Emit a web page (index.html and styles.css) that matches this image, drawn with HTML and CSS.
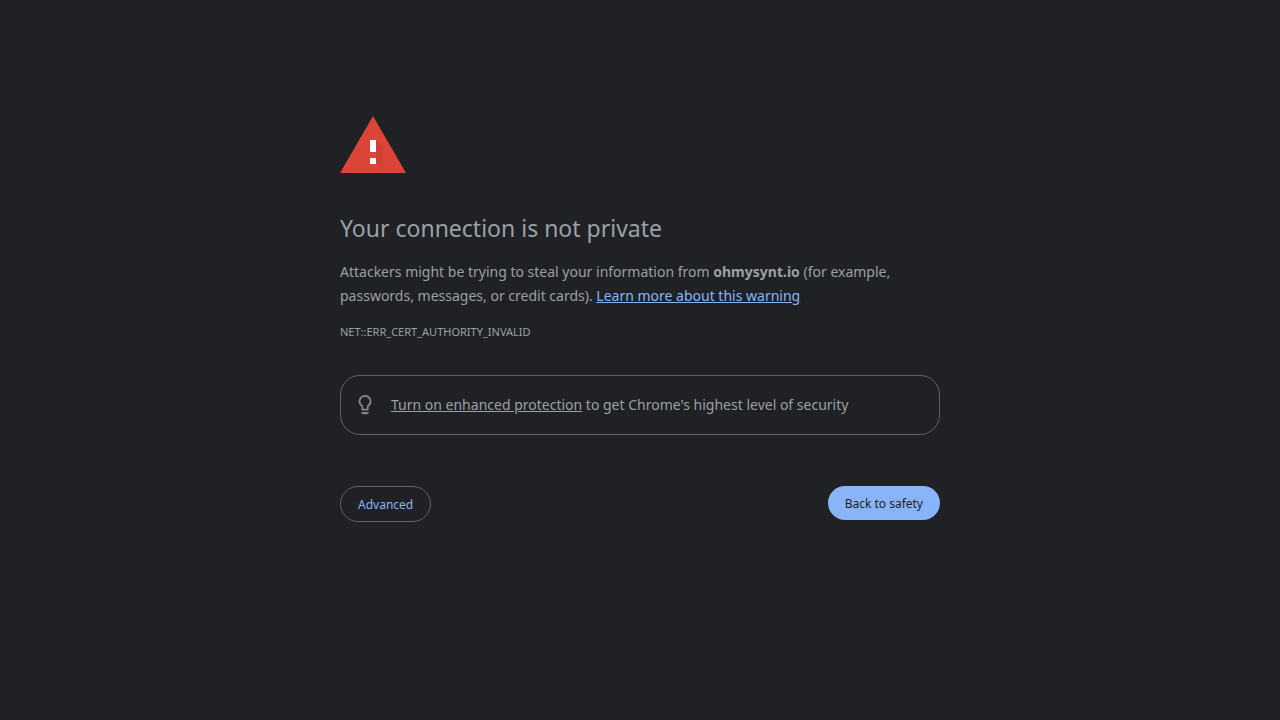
FILE: index.html
```
<!DOCTYPE html>
<html lang="en">
<head>
  <meta charset="UTF-8">
  <meta name="viewport" content="width=device-width, initial-scale=1.0">
  <title>Privacy error</title>
  <link rel="stylesheet" href="styles.css">
</head>
<body>
  <main class="interstitial">
    <svg class="warning-icon" viewBox="0 0 66 57" aria-hidden="true">
      <path fill="#db4437" d="M33 0 66 57H0z"/>
      <path fill="#c23a2e" d="M36 24 44 32 42 50 36 48z" opacity=".4"/>
      <path fill="#fff" d="M30 24h6v12h-6zM30 42h6v6h-6z"/>
    </svg>
    <h1>Your connection is not private</h1>
    <p class="message">Attackers might be trying to steal your information from <strong>ohmysynt.io</strong> (for example, passwords, messages, or credit cards). <a href="#">Learn more about this warning</a></p>
    <div class="error-code">NET::ERR_CERT_AUTHORITY_INVALID</div>
    <div class="protection">
      <svg class="bulb-icon" viewBox="0 0 24 24" aria-hidden="true">
        <path fill="#80868b" d="M12 1a7 7 0 0 0-7 7c0 2.38 1.19 4.47 3 5.74V17c0 .55.45 1 1 1h6c.55 0 1-.45 1-1v-3.26A7 7 0 0 0 12 1zm2.85 11.1-.85.6V16h-4v-3.3l-.85-.6A5 5 0 1 1 14.85 12.1zM8 19.5h8V21H8zM9 21h6v1H9z"/>
      </svg>
      <p><a href="#">Turn on enhanced protection</a> to get Chrome's highest level of security</p>
    </div>
    <div class="buttons">
      <button type="button" class="advanced">Advanced</button>
      <button type="button" class="primary">Back to safety</button>
    </div>
  </main>
</body>
</html>
```

FILE: styles.css
```
body {
  margin: 0;
  background-color: #202124;
  color: #9aa0a6;
  font-family: "Segoe UI", "Noto Sans", sans-serif;
  font-size: 14px;
  line-height: 24px;
}
.interstitial {
  box-sizing: border-box;
  max-width: 600px;
  margin: 0 auto;
  padding-top: 116px;
}
.warning-icon {
  display: block;
  width: 66px;
  height: 57px;
  margin-bottom: 40px;
}
h1 {
  margin: 0 0 17px;
  font-size: 23px;
  font-weight: 400;
  line-height: 30px;
}
p {
  margin: 0;
}
.message a {
  color: #8ab4f8;
}
.error-code {
  margin-top: 12px;
  font-size: 11px;
}
.protection {
  display: flex;
  align-items: center;
  gap: 15px;
  margin-top: 31px;
  padding: 17px 13px;
  border: 1px solid #5f6368;
  border-radius: 20px;
}
.protection a {
  color: inherit;
}
.bulb-icon {
  flex: none;
  width: 22px;
  height: 22px;
}
.buttons {
  display: flex;
  justify-content: space-between;
  align-items: flex-start;
  margin-top: 51px;
}
button {
  padding: 8px 17px 6px;
  border: none;
  border-radius: 20px;
  font-family: inherit;
  font-size: 12px;
  line-height: 20px;
  cursor: pointer;
}
.advanced {
  background: transparent;
  border: 1px solid #5f6368;
  color: #8ab4f8;
}
.primary {
  background: #8ab4f8;
  color: #202124;
}
```
